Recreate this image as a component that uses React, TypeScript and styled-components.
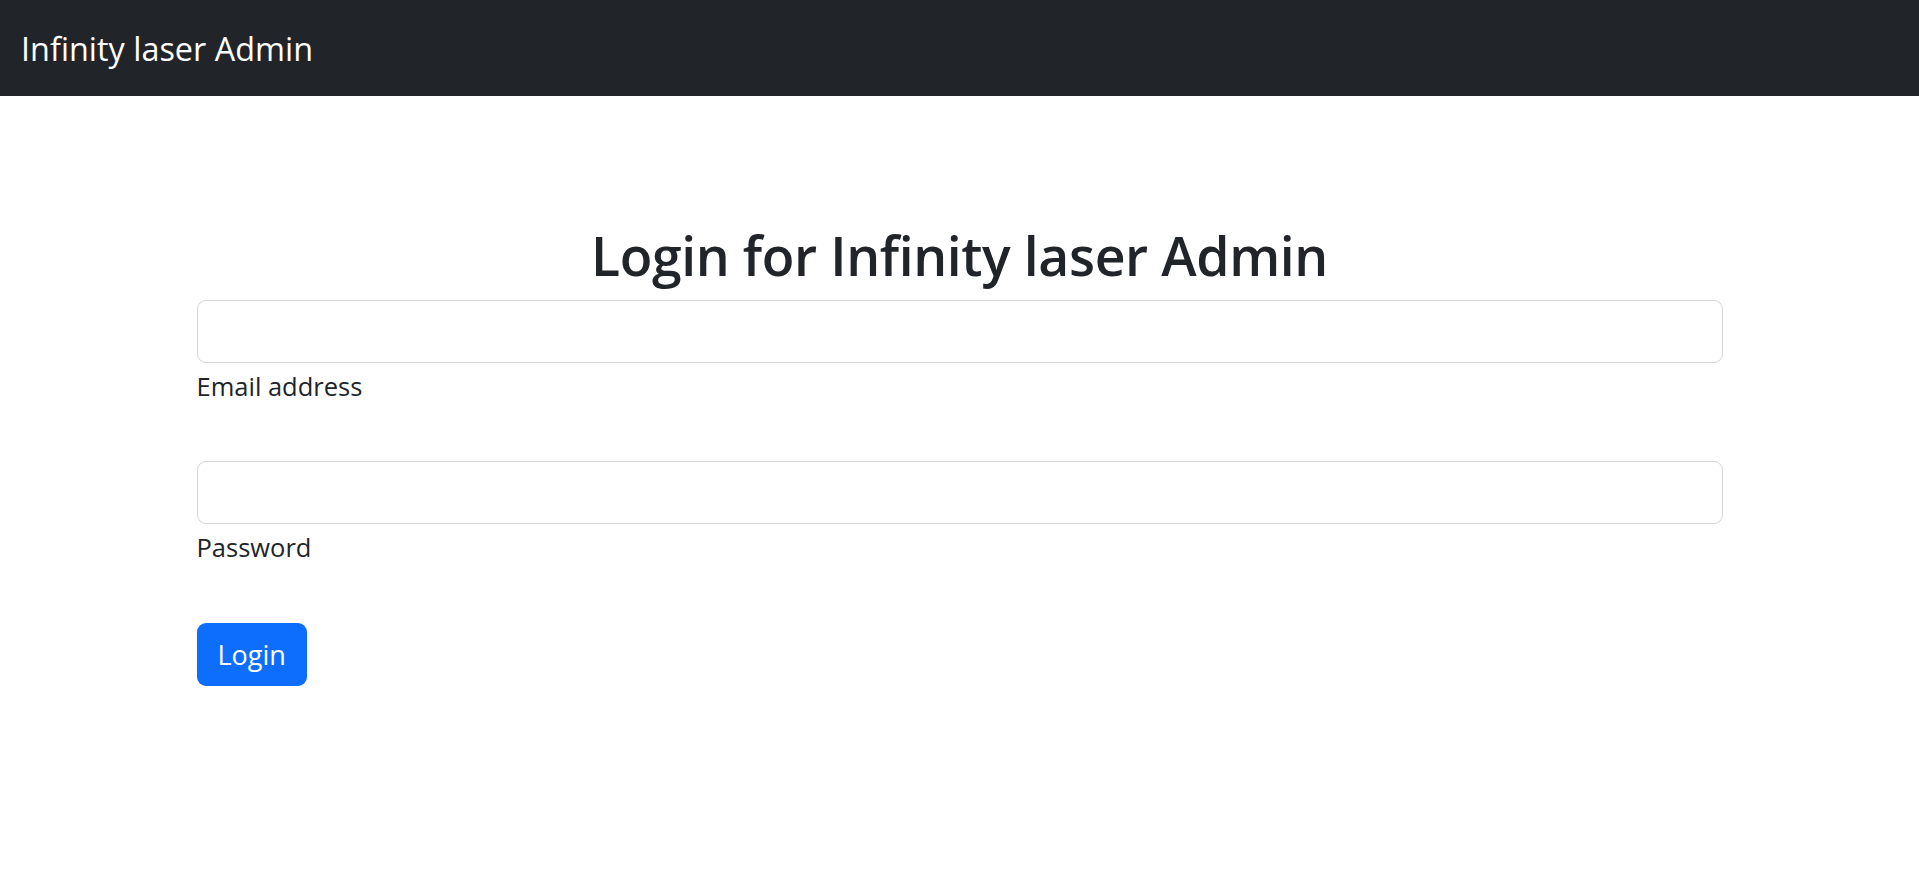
import React from "react";
import styled, { createGlobalStyle } from "styled-components";

const Global = createGlobalStyle`
  html, body { margin: 0; padding: 0; background: #ffffff; }
  body {
    font-family: "Open Sans", "Noto Sans", "Liberation Sans", sans-serif;
    color: #212529;
  }
  * { box-sizing: border-box; }
`;

const NavBar = styled.nav`
  height: 96px;
  background: #212529;
  display: flex;
  align-items: center;
  padding-left: 21px;
`;

const Brand = styled.a`
  color: #ffffff;
  font-size: 32.4px;
  line-height: 1.2;
  text-decoration: none;
  font-weight: 400;
`;

const Main = styled.main`
  width: 1526px;
  margin: 0 auto;
  padding-top: 126px;
`;

const Title = styled.h1`
  margin: 0 0 11px;
  font-size: 53.5px;
  line-height: 67px;
  font-weight: 600;
  letter-spacing: -0.4px;
  text-align: center;
  color: #212529;
`;

const Form = styled.form`
  display: flex;
  flex-direction: column;
  align-items: flex-start;
`;

const Field = styled.div<{ $gap: number }>`
  width: 100%;
  display: flex;
  flex-direction: column;
  margin-bottom: ${(p) => p.$gap}px;
`;

const Input = styled.input`
  width: 100%;
  height: 63px;
  border: 1px solid #d3d6db;
  border-radius: 9px;
  background: #fff;
  padding: 0 18px;
  font-family: inherit;
  font-size: 25px;
  color: #212529;
  outline: none;
`;

const Label = styled.label<{ $top: number }>`
  margin-top: ${(p) => p.$top}px;
  font-size: 25.5px;
  line-height: 1.5;
  color: #212529;
`;

const Button = styled.button`
  height: 63px;
  padding: 0 21px;
  border: none;
  border-radius: 9px;
  background: #0d6efd;
  color: #ffffff;
  font-family: inherit;
  font-size: 27px;
  line-height: 1;
  cursor: pointer;
`;

export default function App() {
  return (
    <>
      <Global />
      <NavBar>
        <Brand href="#">Infinity laser Admin</Brand>
      </NavBar>
      <Main>
        <Title>Login for Infinity laser Admin</Title>
        <Form onSubmit={(e) => e.preventDefault()}>
          <Field $gap={56}>
            <Input id="email" type="email" />
            <Label htmlFor="email" $top={4}>Email address</Label>
          </Field>
          <Field $gap={56}>
            <Input id="password" type="password" />
            <Label htmlFor="password" $top={4}>Password</Label>
          </Field>
          <Button type="submit">Login</Button>
        </Form>
      </Main>
    </>
  );
}
